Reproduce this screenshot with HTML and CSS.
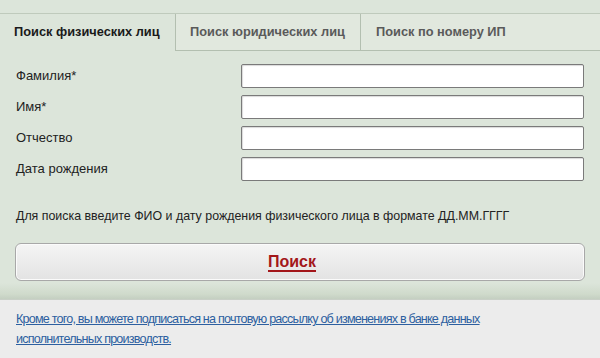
FILE: index.html
```html
<!DOCTYPE html>
<html lang="ru">
<head>
    <meta charset="UTF-8">
    <title>Поиск физических лиц</title>
    <link rel="stylesheet" href="styles.css">
</head>
<body>
    <div class="search-box">
        <div class="tabs">
            <div class="tab tab-active">Поиск физических лиц</div>
            <div class="tab tab-legal">Поиск юридических лиц</div>
            <div class="tab tab-number">Поиск по номеру ИП</div>
        </div>
        <form class="search-form">
            <div class="form-row">
                <label class="form-label">Фамилия*</label>
                <input class="form-input" type="text">
            </div>
            <div class="form-row">
                <label class="form-label">Имя*</label>
                <input class="form-input" type="text">
            </div>
            <div class="form-row">
                <label class="form-label">Отчество</label>
                <input class="form-input" type="text">
            </div>
            <div class="form-row">
                <label class="form-label">Дата рождения</label>
                <input class="form-input" type="text">
            </div>
            <p class="hint">Для поиска введите ФИО и дату рождения физического лица в формате ДД.ММ.ГГГГ</p>
            <button class="search-button" type="button"><span>Поиск</span></button>
        </form>
    </div>
    <div class="subscribe">
        <a href="#" class="subscribe-link">Кроме того, вы можете подписаться на почтовую рассылку об изменениях в банке данных исполнительных производств.</a>
    </div>
</body>
</html>
```

FILE: styles.css
```css
body {
    margin: 0;
    padding: 0;
    background-color: #ececec;
    font-family: 'Liberation Sans', Arial, sans-serif;
    color: #222;
}
.search-box {
    background-color: #dce5da;
    padding-top: 13px;
    border-bottom: 1px solid #c9d0c7;
}
.tabs {
    display: flex;
    border-top: 1px solid #bfcabc;
    height: 37px;
}
.tab {
    box-sizing: border-box;
    height: 37px;
    line-height: 35px;
    font-size: 12.8px;
    font-weight: bold;
    color: #5a5a5a;
    background-color: #e1e8de;
    border-bottom: 1px solid #b3bfb0;
    border-left: 1px solid #b3bfb0;
}
.tab-active {
    width: 175px;
    padding-left: 14px;
    color: #1a1a1a;
    background-color: #dce5da;
    border-bottom: none;
    border-left: none;
}
.tab-legal {
    width: 185px;
    padding-left: 14px;
}
.tab-number {
    flex: 1;
    padding-left: 15px;
}
.search-form {
    padding: 13px 16px 0 15px;
}
.form-row {
    display: flex;
    align-items: center;
    height: 23px;
    margin-bottom: 8px;
}
.form-label {
    width: 225px;
    padding-left: 1px;
    font-size: 13px;
}
.form-input {
    box-sizing: border-box;
    width: 344px;
    height: 24px;
    margin: 0;
    border: 1px solid #7a7a7a;
    border-radius: 2px;
    background-color: #fff;
    box-shadow: inset 1px 1px 1px rgba(0, 0, 0, 0.15);
}
.hint {
    margin: 28px 0 19px 1px;
    font-size: 12.4px;
    line-height: 16px;
}
.search-button {
    display: block;
    box-sizing: border-box;
    width: 570px;
    height: 38px;
    margin: 0;
    padding: 0 16px 0 0;
    border: 1px solid #a8a8a8;
    border-radius: 6px;
    background: linear-gradient(#f5f5f5, #e3e3e3);
    box-shadow: inset 0 0 0 1px #fbfbfb;
    font-family: 'Liberation Sans', Arial, sans-serif;
    font-size: 16px;
    font-weight: bold;
    color: #a3161a;
    cursor: pointer;
}
.search-button span {
    text-decoration: underline;
    text-underline-offset: 3px;
    text-decoration-thickness: 2px;
}
.search-box::after {
    content: '';
    display: block;
    height: 16px;
    margin-top: 2px;
    background: linear-gradient(#dce5da, #cfdacb 70%, #c4cfc1);
}
.subscribe {
    padding: 9px 16px 0 16px;
    width: 540px;
}
.subscribe-link {
    font-size: 12.6px;
    line-height: 19px;
    letter-spacing: -0.8px;
    color: #2d5fa0;
}
```
